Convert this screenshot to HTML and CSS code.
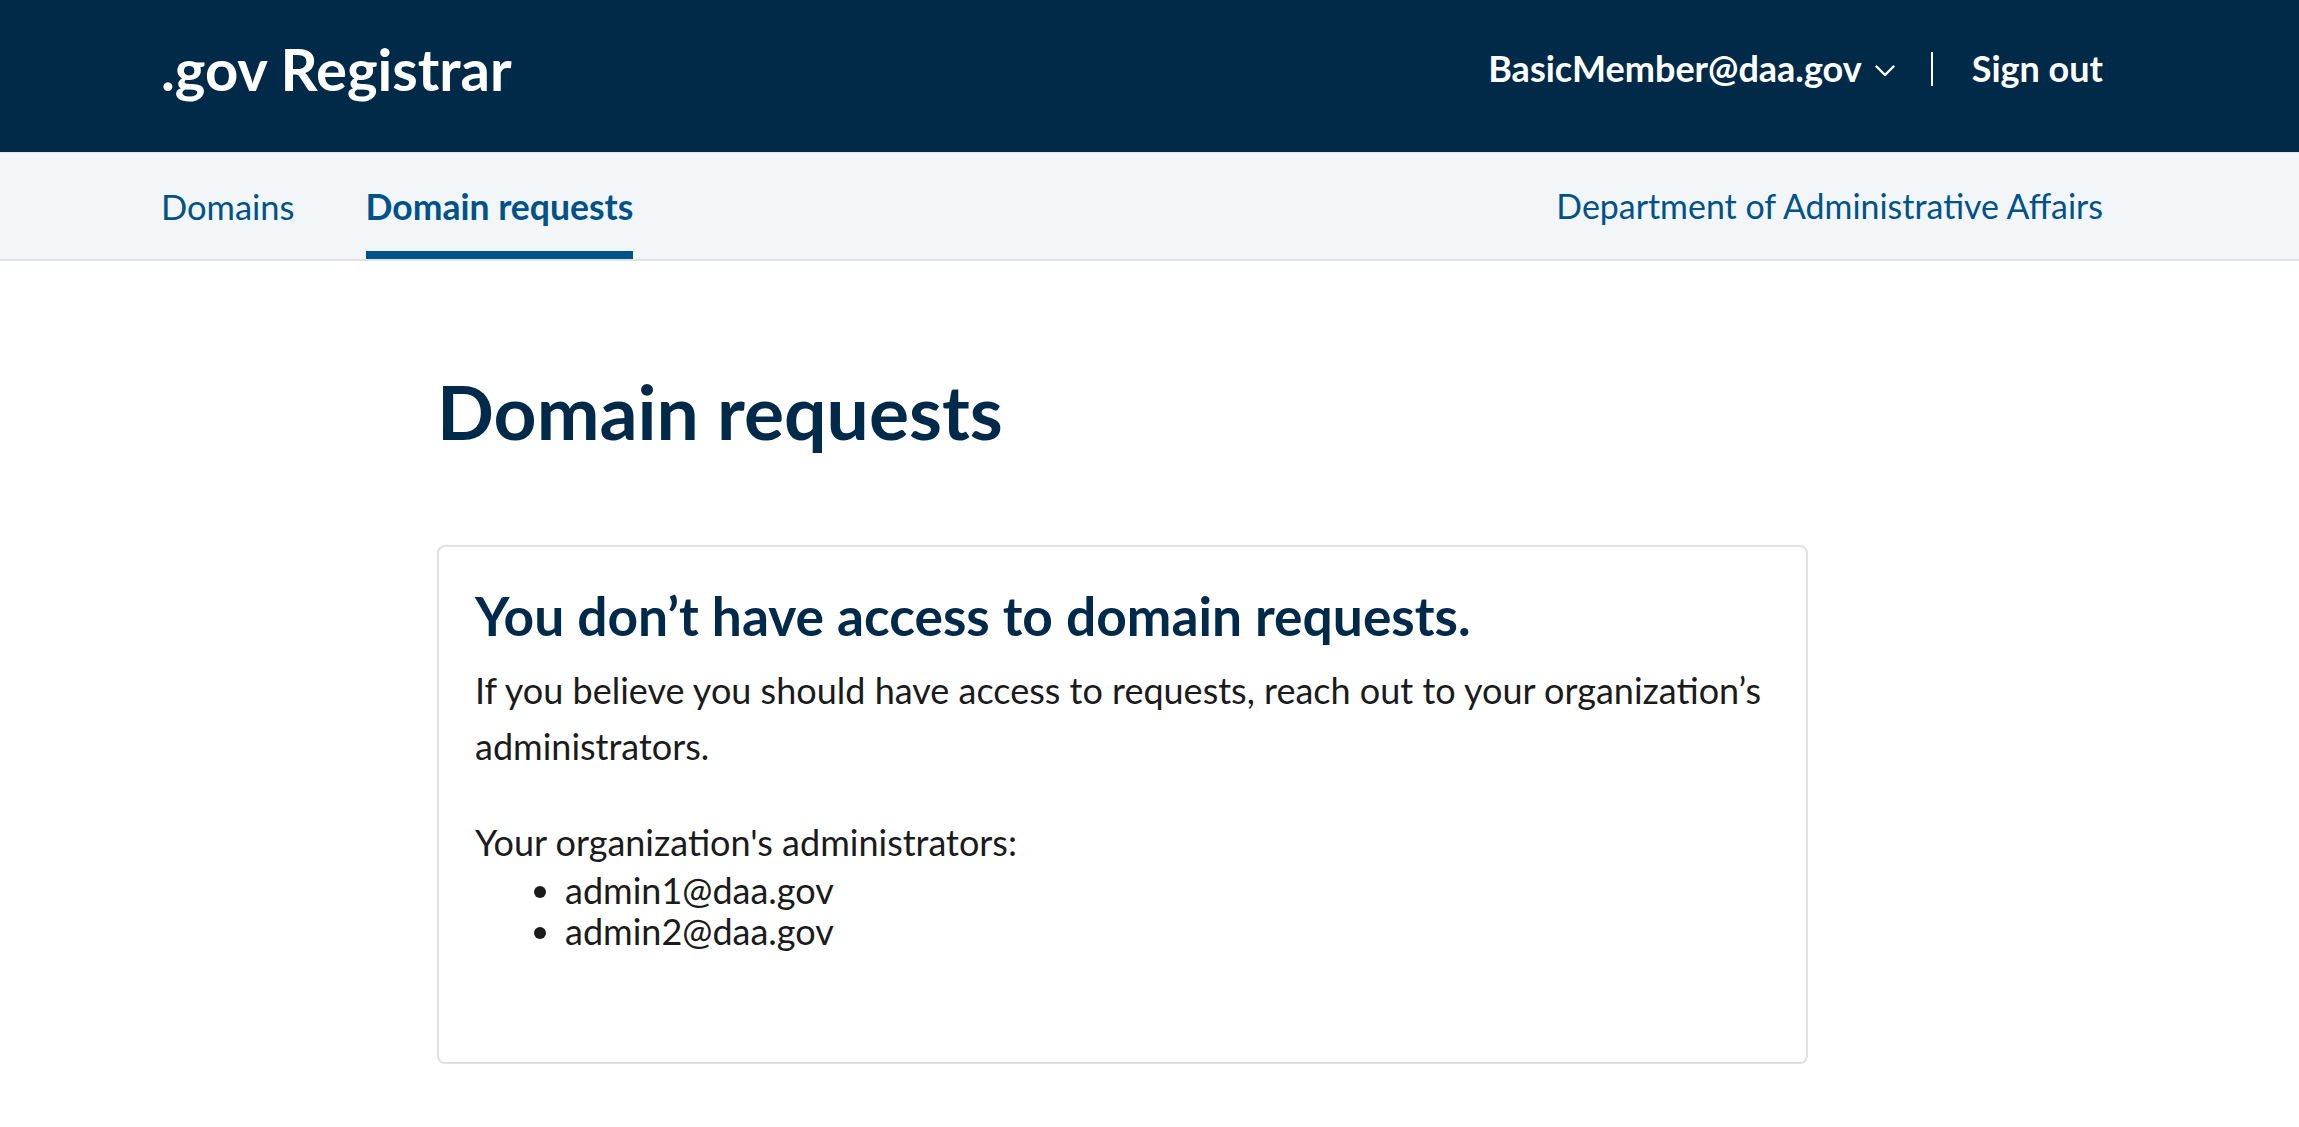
FILE: index.html
```html
<!DOCTYPE html>
<html lang="en">
<head>
<meta charset="utf-8">
<title>Domain requests | .gov Registrar</title>
<link rel="stylesheet" href="styles.css">
</head>
<body>
<header class="topbar">
  <a class="logo" href="#">.gov Registrar</a>
  <div class="account">
    <a class="user" href="#">BasicMember@daa.gov
      <svg class="chev" viewBox="0 0 20 12" width="20" height="12" aria-hidden="true"><path d="M1.5 1.5 L10 10 L18.5 1.5" fill="none" stroke="#ffffff" stroke-width="2.4" stroke-linecap="round" stroke-linejoin="round"/></svg>
    </a>
    <span class="sep"></span>
    <a class="signout" href="#">Sign out</a>
  </div>
</header>
<nav class="subnav">
  <div class="tabs">
    <a class="tab" href="#">Domains</a>
    <a class="tab active" href="#">Domain requests</a>
  </div>
  <a class="org" href="#">Department of Administrative Affairs</a>
</nav>
<main class="main">
  <h1 class="title">Domain requests</h1>
  <section class="card">
    <h2 class="card-title">You don’t have access to domain requests.</h2>
    <p class="lead">If you believe you should have access to requests, reach out to your organization’s administrators.</p>
    <p class="admins-label">Your organization's administrators:</p>
    <ul class="admins">
      <li>admin1@daa.gov</li>
      <li>admin2@daa.gov</li>
    </ul>
  </section>
</main>
</body>
</html>
```
FILE: styles.css
```css
html, body {
  margin: 0;
  padding: 0;
  background: #ffffff;
}
body {
  font-family: Lato, "Open Sans", "Liberation Sans", sans-serif;
  color: #1b1b1b;
}
a { text-decoration: none; }

.topbar {
  height: 152px;
  box-sizing: border-box;
  background: #002a47;
  display: flex;
  align-items: center;
  justify-content: space-between;
  padding: 0 196px 14px 161px;
}
.logo {
  color: #ffffff;
  font-weight: 700;
  font-size: 58px;
  line-height: 1.2;
}
.account {
  display: flex;
  align-items: center;
}
.user, .signout {
  color: #ffffff;
  font-weight: 700;
  font-size: 36px;
  line-height: 1.2;
}
.user {
  display: flex;
  align-items: center;
}
.chev {
  margin-left: 13px;
  margin-top: 4px;
  width: 20px;
  height: 12px;
}
.sep {
  width: 2px;
  height: 34px;
  background: #ffffff;
  margin: 0 39px 0 36px;
}

.subnav {
  height: 109px;
  box-sizing: border-box;
  background: #f2f6f9;
  border-top: 1px solid #dfe3e7;
  border-bottom: 2px solid #dfe1e2;
  display: flex;
  justify-content: space-between;
  align-items: stretch;
  padding: 0 196px 0 161px;
}
.tabs {
  display: flex;
  gap: 71px;
}
.tab, .org {
  display: flex;
  align-items: center;
  color: #005288;
  font-size: 34.5px;
}
.tab.active {
  font-weight: 700;
  font-size: 35.5px;
  box-shadow: inset 0 -8px 0 #005288;
}
.org {
  font-size: 33.9px;
}

.main {
  padding: 105px 0 60px 437px;
}
.title {
  margin: 0 0 89px;
  font-size: 75px;
  line-height: 1.2;
  font-weight: 700;
  color: #00294a;
}
.card {
  width: 1371px;
  box-sizing: border-box;
  border: 2px solid #dfe1e2;
  border-radius: 8px;
  padding: 37px 36px 40px 36px;
}
.card-title {
  margin: 0 0 14px;
  font-size: 53.3px;
  line-height: 1.2;
  font-weight: 700;
  color: #00294a;
}
.lead {
  margin: 0 0 40px;
  font-size: 36px;
  line-height: 56px;
}
.admins-label {
  margin: 0;
  font-size: 36px;
  line-height: 56px;
}
.admins {
  margin: 0 0 70px;
  padding-left: 90px;
  font-size: 36px;
  line-height: 41px;
}
```
